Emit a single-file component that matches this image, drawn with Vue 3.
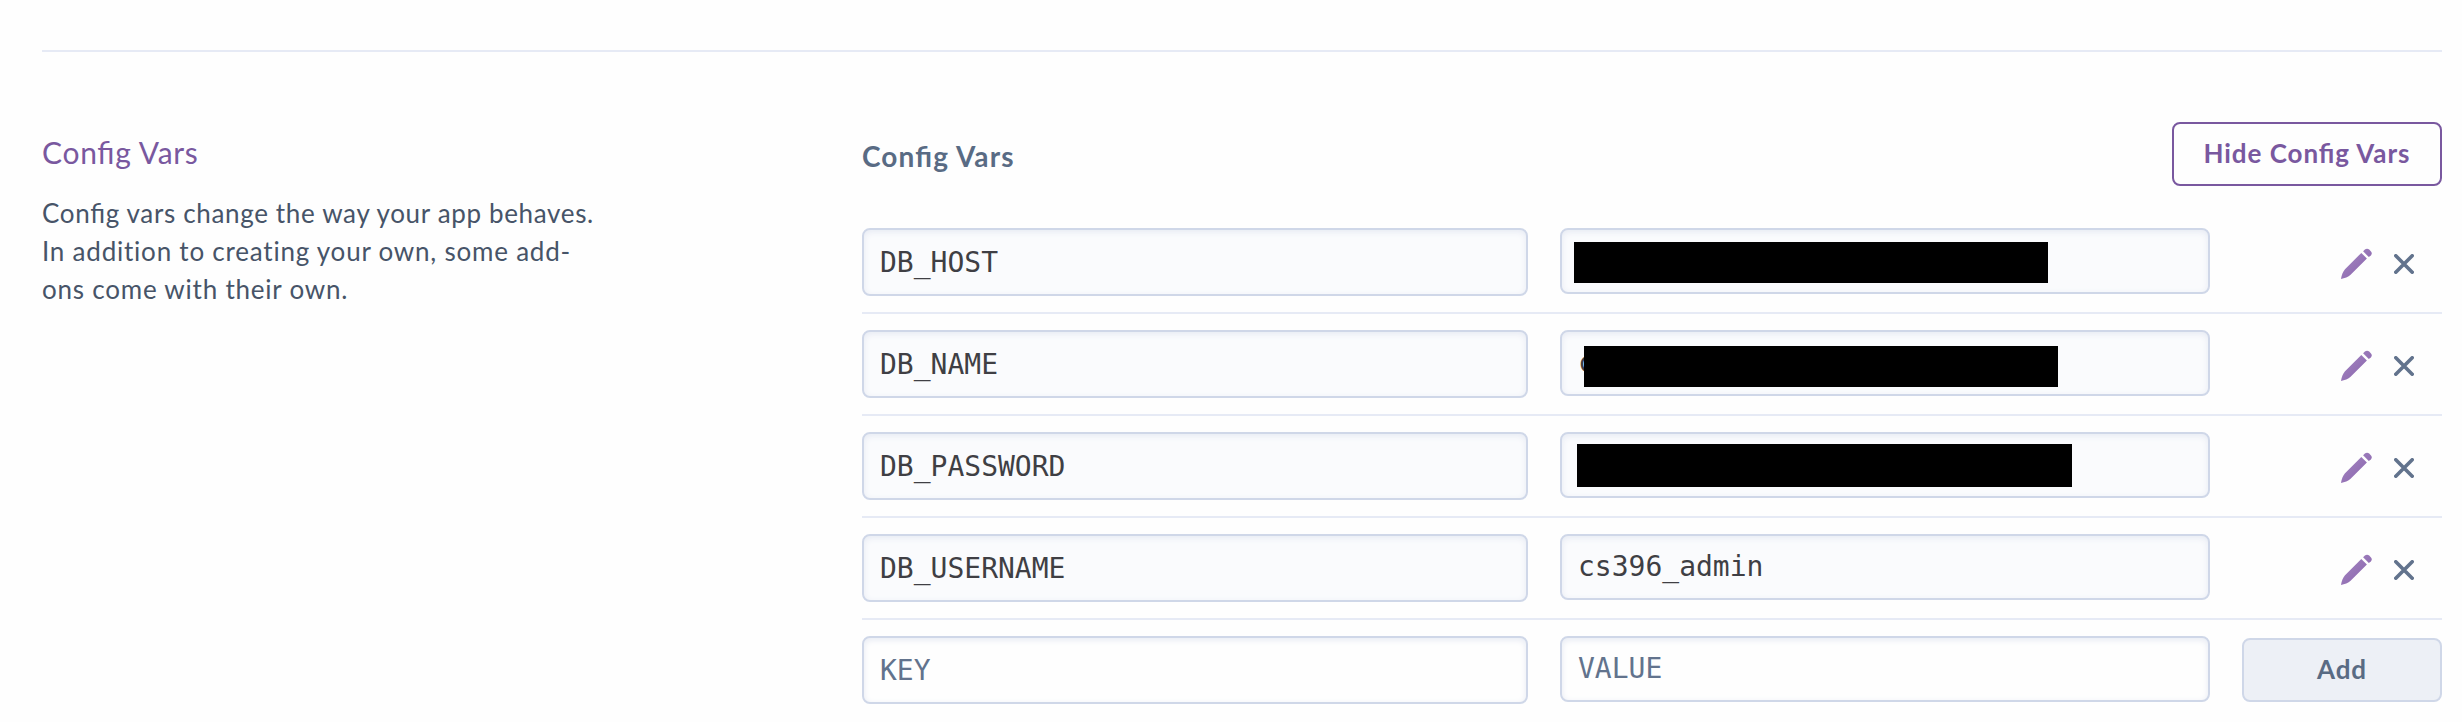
<script setup>
const vars = [
  { key: 'DB_HOST', value: '', mask: 'mask-host' },
  { key: 'DB_NAME', value: 'c', mask: 'mask-name' },
  { key: 'DB_PASSWORD', value: '', mask: 'mask-password' },
  { key: 'DB_USERNAME', value: 'cs396_admin', mask: '' },
]
</script>

<template>
  <main class="page">
    <section class="settings">
      <aside class="intro">
        <h2>Config Vars</h2>
        <p>
          <span class="lead">Config vars change the way your app behaves.</span><br />
          <span>In addition to creating your own, some add-</span><br />
          <span>ons come with their own.</span>
        </p>
      </aside>

      <div class="panel">
        <header class="panel-head">
          <h3>Config Vars</h3>
          <button class="hide-btn" type="button">Hide Config Vars</button>
        </header>

        <div v-for="item in vars" :key="item.key" class="row">
          <div class="field key filled">{{ item.key }}</div>
          <div class="field value filled">
            {{ item.value }}
            <span v-if="item.mask" class="mask" :class="item.mask"></span>
          </div>
          <div class="actions">
            <svg class="pencil" width="32" height="32" viewBox="0 0 32 32">
              <defs>
                <linearGradient id="pencil-fill" x1="0" y1="0" x2="1" y2="1">
                  <stop offset="0" stop-color="#a78bc4" />
                  <stop offset="1" stop-color="#865faa" />
                </linearGradient>
              </defs>
              <path
                fill="url(#pencil-fill)"
                d="M21.300 4.900 26.900 10.400 10.600 26.700C8.400 28.800 4.500 30.200 1 31 1.500 27.400 3 23.400 5 21.200ZM23.100 3.300 24.900 1.600C26.100.500 28 .500 29.200 1.600L31 3.400C32.100 4.600 32.100 6.200 30.900 7.400L28.800 9.100Z"
              />
            </svg>
            <svg class="cross" width="20" height="20" viewBox="0 0 20 20">
              <path d="M1.800 1.800 18.200 18.200M18.200 1.800 1.800 18.200" />
            </svg>
          </div>
        </div>

        <div class="row last">
          <div class="field key placeholder">KEY</div>
          <div class="field value placeholder">VALUE</div>
          <button class="add-btn" type="button">Add</button>
        </div>
      </div>
    </section>
  </main>
</template>

<style>
body {
  background: #fff;
}
</style>

<style scoped>
.page {
  box-sizing: border-box;
  width: 2462px;
  height: 722px;
  padding: 50px 20px 0 42px;
  overflow: hidden;
  background: #fefefe;
  font-family: Lato, "Open Sans", sans-serif;
}
.settings {
  display: grid;
  grid-template-columns: 820px 1580px;
  border-top: 2px solid #e6eaf5;
}
.intro {
  padding-top: 80px;
}
h2,
h3,
p {
  margin: 0;
}
h2,
h3,
button,
.lead {
  font-feature-settings: "liga" 1;
}
h2 {
  color: #79589f;
  font-size: 30px;
  font-weight: 400;
  letter-spacing: 0.7px;
  line-height: 40px;
}
p {
  margin-top: 22px;
  color: #475468;
  font-size: 26px;
  letter-spacing: 0.78px;
  line-height: 38px;
  white-space: nowrap;
}
.lead {
  letter-spacing: 0.66px;
}
.panel-head {
  display: flex;
  align-items: flex-start;
  justify-content: space-between;
  height: 90px;
  padding-top: 70px;
}
h3 {
  margin-top: 16px;
  color: #596b84;
  font-size: 28px;
  font-weight: 700;
  letter-spacing: 1.12px;
  line-height: 36px;
}
button {
  box-sizing: border-box;
  height: 64px;
  margin: 0;
  padding: 0 0 2px;
  border-radius: 8px;
  font-family: inherit;
  font-size: 26px;
  font-weight: 700;
  letter-spacing: 0.95px;
}
.hide-btn {
  width: 270px;
  border: 2px solid #79589f;
  background: #fefefe;
  color: #79589f;
}
.row {
  box-sizing: border-box;
  display: grid;
  grid-template-columns: 666px 650px 200px;
  column-gap: 32px;
  align-items: start;
  height: 102px;
  padding-top: 16px;
  border-bottom: 2px solid #e6eaf5;
}
.row.last {
  border-bottom: 0;
}
.field {
  position: relative;
  box-sizing: border-box;
  border: 2px solid #cfd7e8;
  border-radius: 8px;
  box-shadow: inset 0 2px 6px #e6eaf3;
  color: #3f3f44;
  font-family: "DejaVu Sans Mono", monospace;
  font-size: 28px;
}
.filled {
  background: #fafbfd;
}
.placeholder {
  color: #62738d;
}
.key {
  height: 68px;
  padding-left: 16px;
  line-height: 66px;
}
.value {
  height: 66px;
  padding-left: 16px;
  line-height: 62px;
}
.mask {
  position: absolute;
  width: 474px;
  height: 41px;
  background: #000;
}
.mask-host {
  top: 12px;
  left: 12px;
}
.mask-name {
  top: 14px;
  left: 22px;
}
.mask-password {
  top: 10px;
  left: 15px;
  width: 495px;
  height: 43px;
}
.actions {
  display: flex;
  align-items: center;
  justify-content: flex-end;
  gap: 22px;
  height: 72px;
  padding-right: 28px;
}
.cross path {
  fill: none;
  stroke: #62738d;
  stroke-width: 3.6;
  stroke-linecap: round;
}
.add-btn {
  width: 200px;
  margin-top: 2px;
  border: 2px solid #cfd7e8;
  background: #edf0f6;
  color: #596b84;
}
</style>
